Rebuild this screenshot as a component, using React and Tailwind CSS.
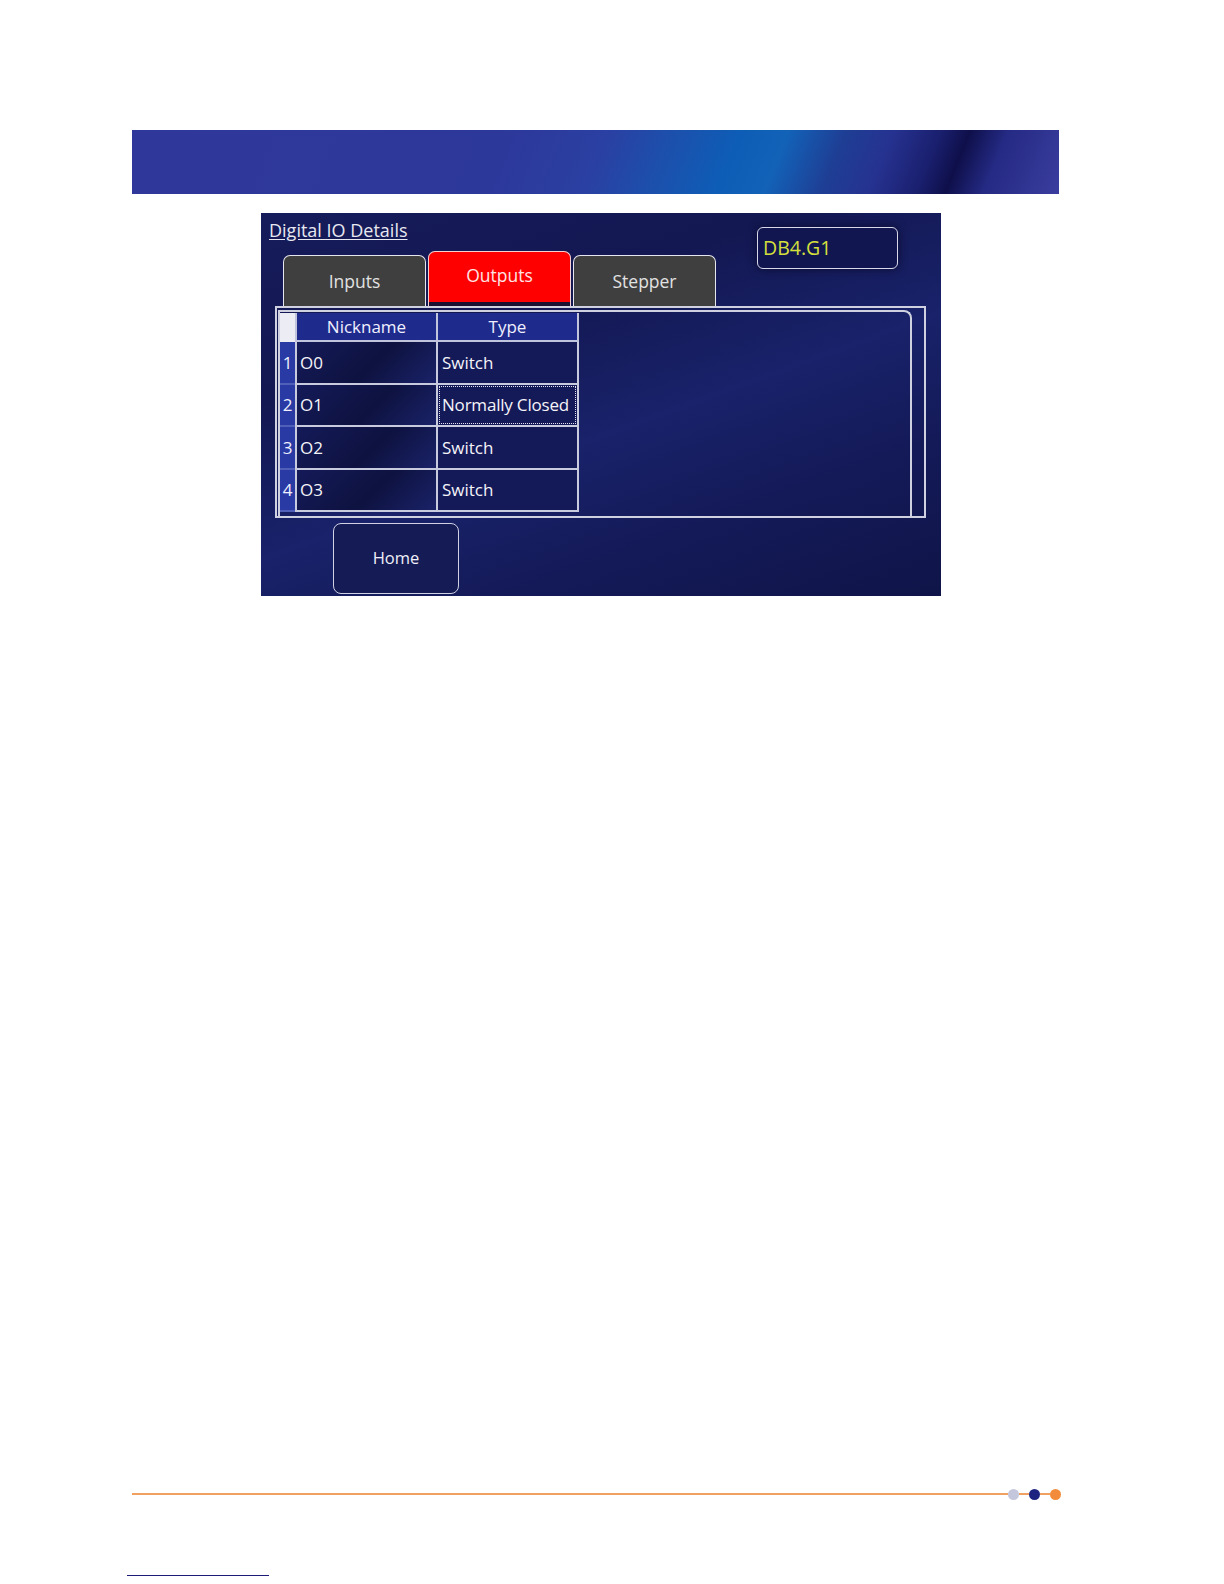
import React from "react";

const font = { fontFamily: '"Open Sans", "Liberation Sans", sans-serif' };

function Tab({ label, active }) {
  if (active) {
    return (
      <div className="w-[143px] h-[55px] rounded-t-[7px] border-[1.5px] border-b-0 border-[#f4d0d0] bg-[#ff0000] flex flex-col">
        <div className="flex-1 flex items-center justify-center text-[17.5px] text-[#ffe4e4] pb-[4px]">{label}</div>
        <div className="h-[4px] bg-[#1a1030]" />
      </div>
    );
  }
  return (
    <div className="w-[143px] h-[51px] rounded-t-[7px] border-[1.5px] border-b-0 border-[#e6e6ee] bg-[#3f3f3f] flex items-center justify-center text-[17.5px] text-[#e2e2e2]">
      {label}
    </div>
  );
}

const rows = [
  ["1", "O0", "Switch"],
  ["2", "O1", "Normally Closed"],
  ["3", "O2", "Switch"],
  ["4", "O3", "Switch"],
];

export default function App() {
  return (
    <div className="w-[1224px] h-[1584px] bg-white flex flex-col" style={font}>
      {/* header band */}
      <div className="ml-[132px] mt-[130px] w-[927px] h-[64px] bg-[linear-gradient(112deg,#30379a_0%,#2d389b_40%,#2a40a2_50%,#1a52ae_58%,#0d5db6_64%,#1262b8_69%,#1e3e94_75%,#263290_80%,#1a1f6e_85%,#0e0f4a_88%,#252a84_92%,#3a3d9e_100%)]" />

      {/* screen panel */}
      <div className="ml-[261px] mt-[19px] w-[680px] h-[383px] overflow-hidden bg-[linear-gradient(160deg,#161c5a_0%,#131852_30%,#19226a_55%,#141a58_75%,#0f1448_100%)] flex flex-col text-white">
        <div className="flex">
          <div className="flex flex-col">
            <div className="pl-[8px] pt-[6px] text-[18px] leading-[22px] text-[#e8e8f0] underline underline-offset-2">Digital IO Details</div>
            <div className="flex items-end gap-[2px] ml-[22px] mt-[10px] h-[55px]">
              <Tab label="Inputs" />
              <Tab label="Outputs" active />
              <Tab label="Stepper" />
            </div>
          </div>
          <div className="ml-[41px] mt-[14px] w-[141px] h-[42px] rounded-[6px] border-[1.5px] border-[#d8d8ea] bg-[#121650] flex items-center pl-[5px] text-[19.5px] text-[#d6e03c] shadow-[0_0_10px_#0a0c30]">
            DB4.G1
          </div>
        </div>

        {/* frame */}
        <div className="ml-[14px] w-[651px] h-[212px] shrink-0 border-2 border-[#cfd0e0] pl-[1px] pt-[2px] flex">
          <div className="w-[634px] h-[206px] border-t-2 border-r-2 border-l-2 border-[#cfd0e0] rounded-tr-[8px] pt-[1px]">
            <div className="flex flex-col w-[299px] text-[17px]">
              <div className="flex h-[29px]">
                <div className="w-[15px] bg-[#ececf4]" />
                <div className="w-[141px] bg-[#1e2a8c] border-l-2 border-b-2 border-[#c0c4dc] flex items-center justify-center text-[#f0f0ff]">Nickname</div>
                <div className="w-[143px] bg-[#1e2a8c] border-l-2 border-r-2 border-b-2 border-[#c0c4dc] flex items-center justify-center text-[#f0f0ff]">Type</div>
              </div>
              {rows.map(([n, nick, type], i) => (
                <div key={n} className="flex h-[42.5px]">
                  <div className="w-[15px] bg-[#2a3aa4] flex items-center justify-center text-[#f0f0ff] border-b-2 border-[#5060b8]">{n}</div>
                  <div className="w-[141px] border-l-2 border-b-2 border-[#c8cade] bg-[linear-gradient(135deg,#141a58,#0e1240_55%,#1a2268)] flex items-center pl-[3px] text-[#f4f4f8]">{nick}</div>
                  <div className="w-[143px] border-l-2 border-r-2 border-b-2 border-[#c8cade] bg-[#141a58] flex items-center p-[1px] text-[#f4f4f8]">
                    {i === 1 ? (
                      <div className="w-full h-full border border-dotted border-[#e0e0f0] flex items-center pl-[2px] tracking-[-0.2px]">{type}</div>
                    ) : (
                      <div className="pl-[3px]">{type}</div>
                    )}
                  </div>
                </div>
              ))}
            </div>
          </div>
        </div>

        <div className="ml-[72px] mt-[5px] w-[126px] h-[71px] shrink-0 rounded-[8px] border-[1.5px] border-[#d0d2e4] bg-[#151b55] flex items-center justify-center text-[16.5px] text-[#f0f0f8]">
          Home
        </div>
      </div>

      {/* footer line with dots */}
      <div className="ml-[132px] mt-[892px] w-[929px] h-[12px] flex items-center">
        <div className="flex-1 h-[1.5px] bg-[#f0a060]" />
        <div className="w-[11px] h-[11px] rounded-full bg-[#c4c6dc]" />
        <div className="w-[10px] h-[1.5px] bg-[#f0a060]" />
        <div className="w-[11px] h-[11px] rounded-full bg-[#1c2480]" />
        <div className="w-[10px] h-[1.5px] bg-[#f0a060]" />
        <div className="w-[11px] h-[11px] rounded-full bg-[#f28c3c]" />
      </div>

      <div className="ml-[127px] mt-[75px] w-[142px] h-[1px] bg-[#1c1c78]" />
    </div>
  );
}
